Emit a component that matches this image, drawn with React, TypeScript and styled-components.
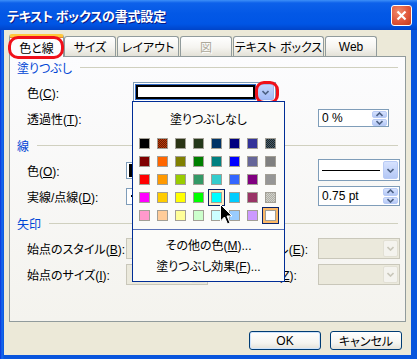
import React from "react";
import styled, { createGlobalStyle, css } from "styled-components";

const GlobalStyle = createGlobalStyle`
  html, body {
    margin: 0;
    padding: 0;
    background: #ffffff;
  }
  body {
    font-family: "Liberation Sans", "Noto Sans CJK JP", sans-serif;
    font-size: 12px;
  }
`;

// office 40 colour palette, "a/b" means a dithered pair
const palette = [
  ["#000000", "#b83c0c/#6a1a00", "#2a3414", "#24381a", "#003366", "#000080", "#333399", "#1c2828/#4a5c6c"],
  ["#800000", "#ff6600", "#808000", "#008000", "#008080", "#0000ff", "#666699", "#808080"],
  ["#ff0000", "#ff9900", "#99cc00", "#339966", "#33cccc", "#3366ff", "#800080", "#969696"],
  ["#ff00ff", "#ffcc00", "#ffff00", "#00ff00", "#00ffff", "#00ccff", "#993366", "#d2d2ca/#aeaea6"],
  ["#ff99cc", "#ffcc99", "#ffff99", "#ccffcc", "#ccffff", "#99ccff", "#cc99ff", "#ffffff"],
];

const tabs = [
  { label: "色と線", w: 55, active: true },
  { label: "サイズ", w: 52 },
  { label: "レイアウト", w: 62 },
  { label: "図", w: 52, disabled: true },
  { label: "テキスト ボックス", w: 91 },
  { label: "Web", w: 52 },
];

const Chevron = ({ up, color = "#4d6185" }: { up?: boolean; color?: string }) => (
  <svg width="7" height="5" viewBox="0 0 7 5">
    <path
      d={up ? "M0.5 4 L3.5 1 L6.5 4" : "M0.5 1 L3.5 4 L6.5 1"}
      fill="none"
      stroke={color}
      strokeWidth="1.6"
    />
  </svg>
);

const Cursor = () => (
  <svg width="13" height="21" viewBox="0 0 13 21">
    <path
      d="M0.5 0.5 L0.5 17 L4.5 13 L7.5 20 L10 19 L7 12 L12 12 Z"
      fill="#000"
      stroke="#fff"
      strokeWidth="1"
    />
  </svg>
);

const Combo = ({
  disabled,
  h = 17,
  children,
}: {
  disabled?: boolean;
  h?: number;
  children?: React.ReactNode;
}) => (
  <ComboBox $disabled={disabled} $h={h}>
    <ComboField>{children}</ComboField>
    <DropBtn $disabled={disabled}>
      <Chevron color={disabled ? "#c9c7ba" : "#4d6185"} />
    </DropBtn>
  </ComboBox>
);

const Spin = ({ value, w, h }: { value: string; w: number; h: number }) => (
  <SpinBox $w={w} $h={h}>
    <SpinText>{value}</SpinText>
    <SpinBtns>
      <SpinBtn>
        <Chevron up />
      </SpinBtn>
      <SpinBtn>
        <Chevron />
      </SpinBtn>
    </SpinBtns>
  </SpinBox>
);

const App = () => {
  return (
    <>
      <GlobalStyle />
      <Window>
        <TitleBar>
          <Title>テキスト ボックスの書式設定</Title>
          <CloseBtn>
            <svg width="11" height="11" viewBox="0 0 11 11">
              <path d="M1.5 1.5 L9.5 9.5 M9.5 1.5 L1.5 9.5" stroke="#fff" strokeWidth="2.2" />
            </svg>
          </CloseBtn>
        </TitleBar>

        <Body>
          <TabStrip>
            {tabs.map((t) => (
              <Tab key={t.label} $w={t.w} $active={t.active} $disabled={t.disabled}>
                {t.label}
                {t.active && <RedMark $kind="tab" />}
              </Tab>
            ))}
          </TabStrip>

          <Panel>
            <Section>
              <Heading>
                <span>塗りつぶし</span>
                <HeadLine />
              </Heading>
              <Rows>
                <Label>
                  色(<u>C</u>):
                </Label>
                <FillCombo>
                  <FillPreview>
                    <FillInner />
                  </FillPreview>
                  <FillDrop>
                    <Chevron />
                    <RedMark $kind="drop" />
                  </FillDrop>

                  <Popup>
                    <NoFill>塗りつぶしなし</NoFill>
                    <SwatchGrid>
                      {palette.map((row, ri) =>
                        row.map((c, ci) => {
                          const frame =
                            ri === 3 && ci === 4 ? "hover" : ri === 4 && ci === 7 ? "selected" : undefined;
                          return (
                            <SwatchCell key={`${ri}-${ci}`} $frame={frame}>
                              <Swatch $color={c} />
                            </SwatchCell>
                          );
                        })
                      )}
                    </SwatchGrid>
                    <Separator />
                    <MenuItem>
                      その他の色(<u>M</u>)...
                    </MenuItem>
                    <MenuItem>
                      塗りつぶし効果(<u>F</u>)...
                    </MenuItem>
                    <CursorWrap>
                      <Cursor />
                    </CursorWrap>
                  </Popup>
                </FillCombo>

                <Label>
                  透過性(<u>T</u>):
                </Label>
                <RightCell>
                  <Spin value="0 %" w={71} h={18} />
                </RightCell>
              </Rows>
            </Section>

            <Section>
              <Heading>
                <span>線</span>
                <HeadLine />
              </Heading>
              <Rows>
                <Label>
                  色(<u>O</u>):
                </Label>
                <Combo>
                  <ColorChip />
                </Combo>
                <RightLabel>
                  スタイル(<u>S</u>):
                </RightLabel>
                <Combo h={22}>
                  <LineSample />
                </Combo>

                <Label>
                  実線/点線(<u>D</u>):
                </Label>
                <Combo>
                  <DashSample />
                </Combo>
                <RightLabel>
                  太さ(<u>W</u>):
                </RightLabel>
                <Spin value="0.75 pt" w={82} h={20} />
              </Rows>
            </Section>

            <Section>
              <Heading>
                <span>矢印</span>
                <HeadLine />
              </Heading>
              <Rows>
                <Label>
                  始点のスタイル(<u>B</u>):
                </Label>
                <Combo disabled h={21} />
                <RightLabel>
                  終点のスタイル(<u>E</u>):
                </RightLabel>
                <Combo disabled h={21} />

                <Label>
                  始点のサイズ(<u>I</u>):
                </Label>
                <Combo disabled h={21} />
                <RightLabel>
                  終点のサイズ(<u>Z</u>):
                </RightLabel>
                <Combo disabled h={21} />
              </Rows>
            </Section>
          </Panel>

          <ButtonRow>
            <Button $default>OK</Button>
            <Button>キャンセル</Button>
          </ButtonRow>
        </Body>
      </Window>
    </>
  );
};

const Window = styled.div`
  width: 417px;
  height: 359px;
  display: flex;
  flex-direction: column;
  background: linear-gradient(90deg, #0831d9 0, #166aee 2px, #0855dd 4px);
  font-feature-settings: "palt";
  color: #000;
  overflow: hidden;
`;

const TitleBar = styled.div`
  height: 30px;
  flex: none;
  display: flex;
  align-items: center;
  justify-content: space-between;
  padding: 0 5px 0 7px;
  background: linear-gradient(#3d8ff8 0, #0d61ea 3px, #0358e6 45%, #0055e5 80%, #0044c9 100%);
`;

const Title = styled.span`
  color: #fff;
  font-family: "Noto Sans CJK JP", sans-serif;
  font-weight: 700;
  font-size: 13px;
  letter-spacing: -0.2px;
  text-shadow: 1px 1px 0 #0a1883;
`;

const CloseBtn = styled.div`
  width: 21px;
  height: 21px;
  box-sizing: border-box;
  border: 1px solid #fff;
  border-radius: 3px;
  background: radial-gradient(circle at 35% 30%, #f08a6c 0, #e0563a 55%, #c23a1c 100%);
  display: flex;
  align-items: center;
  justify-content: center;
`;

const Body = styled.div`
  flex: 1;
  margin: 0 6px 4px 4px;
  background: #ece9d8;
  padding: 4px 5px 5px 5px;
  display: flex;
  flex-direction: column;
`;

const TabStrip = styled.div`
  height: 22px;
  display: flex;
  align-items: flex-end;
  gap: 1px;
  padding-left: 1px;
  position: relative;
  z-index: 2;
`;

const Tab = styled.div<{ $w: number; $active?: boolean; $disabled?: boolean }>`
  width: ${(p) => p.$w}px;
  height: 20px;
  box-sizing: border-box;
  border: 1px solid #919b9c;
  border-bottom: none;
  border-radius: 3px 3px 0 0;
  background: linear-gradient(#ffffff, #f5f4f0 55%, #e3e1d7);
  display: flex;
  align-items: center;
  justify-content: center;
  position: relative;
  white-space: nowrap;
  ${(p) =>
    p.$disabled &&
    css`
      color: #aca899;
      text-shadow: 1px 1px 0 #fff;
    `}
  ${(p) =>
    p.$active &&
    css`
      height: 23px;
      margin: 0 -1px -1px -1px;
      background: #fcfcfe;
      border-top: 3px solid #ffc83c;
      box-shadow: inset 0 1px 0 #e68b2c;
    `}
`;

const RedMark = styled.div<{ $kind: "tab" | "drop" }>`
  position: absolute;
  border: 3px solid #f0101a;
  pointer-events: none;
  ${(p) =>
    p.$kind === "tab"
      ? css`
          left: -2px;
          right: -1px;
          top: -1px;
          bottom: -2px;
          border-radius: 10px;
        `
      : css`
          left: -3px;
          right: -6px;
          top: -4px;
          bottom: -5px;
          border-radius: 9px;
        `}
`;

const Panel = styled.div`
  height: 266px;
  flex: none;
  box-sizing: border-box;
  border: 1px solid #919b9c;
  background: linear-gradient(#fcfcfe, #f4f3ee);
  padding: 3px 7px 0 7px;
  position: relative;
  z-index: 1;
`;

const Section = styled.div`
  display: flex;
  flex-direction: column;
  & + & {
    margin-top: 9px;
  }
`;

const Heading = styled.div`
  height: 14px;
  display: flex;
  align-items: center;
  gap: 8px;
  color: #0046d5;
  white-space: nowrap;
`;

const HeadLine = styled.div`
  flex: 1;
  height: 1px;
  background: #d0d0bf;
`;

const Rows = styled.div`
  margin-top: 7px;
  padding-left: 10px;
  display: grid;
  grid-template-columns: 99px 82px 2px 108px 82px;
  grid-auto-rows: 22px;
  row-gap: 4px;
  align-items: center;
`;

const Label = styled.div`
  grid-column: 1;
  white-space: nowrap;
`;

const RightLabel = styled.div`
  grid-column: 4;
  white-space: nowrap;
`;

const RightCell = styled.div`
  grid-column: 5;
`;

const ComboBox = styled.div<{ $disabled?: boolean; $h: number }>`
  height: ${(p) => p.$h}px;
  box-sizing: border-box;
  border: 1px solid ${(p) => (p.$disabled ? "#c9c7ba" : "#7f9db9")};
  background: ${(p) => (p.$disabled ? "#ebe9dc" : "#fff")};
  display: flex;
  padding: 1px;
  gap: 1px;
`;

const ComboField = styled.div`
  flex: 1;
  display: flex;
  align-items: center;
  overflow: hidden;
  padding-left: 1px;
`;

const DropBtn = styled.div<{ $disabled?: boolean }>`
  width: 15px;
  box-sizing: border-box;
  border-radius: 2px;
  display: flex;
  align-items: center;
  justify-content: center;
  ${(p) =>
    p.$disabled
      ? css`
          background: #f4f3ee;
          border: 1px solid #e2e0d4;
        `
      : css`
          background: linear-gradient(#d6e2fe, #b4c8f6);
          border: 1px solid #b9cbf5;
        `}
`;

const ColorChip = styled.div`
  width: 100%;
  height: 100%;
  background: #000;
  margin-right: 1px;
`;

const LineSample = styled.div`
  flex: 1;
  height: 1px;
  background: #000;
  margin: 0 2px 0 1px;
`;

const DashSample = styled.div`
  width: 60px;
  height: 2px;
  margin-left: 2px;
  background: #000;
`;

const SpinBox = styled.div<{ $w: number; $h: number }>`
  width: ${(p) => p.$w}px;
  height: ${(p) => p.$h}px;
  box-sizing: border-box;
  border: 1px solid #7f9db9;
  background: #fff;
  display: flex;
  padding: 1px;
`;

const SpinText = styled.div`
  flex: 1;
  display: flex;
  align-items: center;
  padding-left: 2px;
`;

const SpinBtns = styled.div`
  width: 15px;
  display: flex;
  flex-direction: column;
  gap: 1px;
`;

const SpinBtn = styled.div`
  flex: 1;
  border-radius: 2px;
  background: linear-gradient(#d6e2fe, #b4c8f6);
  border: 1px solid #b9cbf5;
  box-sizing: border-box;
  display: flex;
  align-items: center;
  justify-content: center;
`;

const FillCombo = styled.div`
  grid-column: 2 / 6;
  margin-left: 7px;
  width: 143px;
  height: 20px;
  box-sizing: border-box;
  border: 1px solid #7f9db9;
  background: #fff;
  display: flex;
  padding: 1px;
  gap: 1px;
  position: relative;
`;

const FillPreview = styled.div`
  flex: 1;
  background: #316ac5;
  padding: 1px;
  display: flex;
`;

const FillInner = styled.div`
  flex: 1;
  background: #fff;
  border: 2px solid #000;
`;

const FillDrop = styled.div`
  width: 17px;
  box-sizing: border-box;
  border-radius: 2px;
  background: linear-gradient(#c3d5fd, #a4bcf6);
  border: 1px solid #9fb6ef;
  display: flex;
  align-items: center;
  justify-content: center;
  position: relative;
`;

const Popup = styled.div`
  position: absolute;
  left: -2px;
  top: 100%;
  width: 153px;
  height: 181px;
  box-sizing: border-box;
  border: 1px solid #002d96;
  background: #fbfbf9;
  display: flex;
  flex-direction: column;
  z-index: 10;
`;

const NoFill = styled.div`
  height: 36px;
  line-height: 36px;
  text-align: center;
`;

const SwatchGrid = styled.div`
  display: grid;
  grid-template-columns: repeat(8, 11px);
  grid-auto-rows: 11px;
  gap: 7px;
  padding-left: 6px;
`;

const SwatchCell = styled.div<{ $frame?: "hover" | "selected" }>`
  position: relative;
  ${(p) =>
    p.$frame &&
    css`
      &::before {
        content: "";
        position: absolute;
        inset: -3px;
        border: 1px solid #0a246a;
        background: ${p.$frame === "hover" ? "#ffeec2" : "#fbb866"};
      }
    `}
`;

const Swatch = styled.div<{ $color: string }>`
  position: relative;
  width: 11px;
  height: 11px;
  box-sizing: border-box;
  border: 1px solid #a29f96;
  ${(p) => {
    const [a, b] = p.$color.split("/");
    return b
      ? css`
          background: repeating-conic-gradient(${a} 0 25%, ${b} 0 50%) 0 0 / 2px 2px;
        `
      : css`
          background: ${a};
        `;
  }}
`;

const Separator = styled.div`
  height: 1px;
  margin: 8px 0 6px;
  background: #5d74b8;
`;

const MenuItem = styled.div`
  height: 21px;
  line-height: 21px;
  text-align: center;
  white-space: nowrap;
`;

const CursorWrap = styled.div`
  position: absolute;
  left: 87px;
  top: 102px;
  line-height: 0;
`;

const ButtonRow = styled.div`
  margin-top: 9px;
  display: flex;
  justify-content: flex-end;
  gap: 9px;
  padding-right: 4px;
`;

const Button = styled.div<{ $default?: boolean }>`
  width: 72px;
  height: 19px;
  box-sizing: border-box;
  border: 1px solid #003c74;
  border-radius: 3px;
  background: linear-gradient(#ffffff, #f4f4f0 65%, #e3e1d8);
  display: flex;
  align-items: center;
  justify-content: center;
  ${(p) =>
    p.$default &&
    css`
      box-shadow: inset 0 0 0 1px #cde3fd;
    `}
`;

export default App;
